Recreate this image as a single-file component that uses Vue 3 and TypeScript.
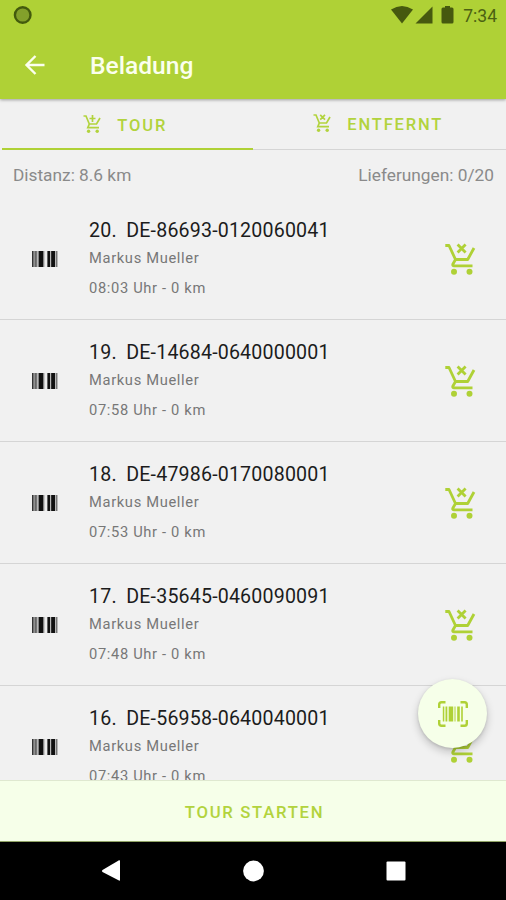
<script setup lang="ts">
interface Delivery {
  nr: number
  code: string
  name: string
  time: string
}

const deliveries: Delivery[] = [
  { nr: 20, code: 'DE-86693-0120060041', name: 'Markus Mueller', time: '08:03 Uhr - 0 km' },
  { nr: 19, code: 'DE-14684-0640000001', name: 'Markus Mueller', time: '07:58 Uhr - 0 km' },
  { nr: 18, code: 'DE-47986-0170080001', name: 'Markus Mueller', time: '07:53 Uhr - 0 km' },
  { nr: 17, code: 'DE-35645-0460090091', name: 'Markus Mueller', time: '07:48 Uhr - 0 km' },
  { nr: 16, code: 'DE-56958-0640040001', name: 'Markus Mueller', time: '07:43 Uhr - 0 km' },
]
</script>

<template>
  <div class="screen">
    <header class="top">
      <div class="status">
        <svg class="ring" width="20" height="20" viewBox="0 0 20 20">
          <circle cx="9.700" cy="10" r="7.800" fill="#83a02b" stroke="#435a0d" stroke-width="2.400" />
        </svg>
        <svg class="signals" width="66" height="20" viewBox="0 0 66 20" fill="#46590f">
          <path d="M0 4.600Q11 -2.800 22 4.600L11 18.500Z" />
          <path d="M24.500 18.500H41.500V1.500Z" />
          <path d="M54 1h5v1.500h2q1.500 0 1.500 1.500v13q0 1.500-1.500 1.500h-9q-1.500 0-1.500-1.500V4q0-1.500 1.500-1.500H54z" />
        </svg>
        <span class="clock">7:34</span>
      </div>
      <div class="appbar">
        <svg class="back" width="22" height="22" viewBox="0 0 22 22" fill="none" stroke="#fbffee" stroke-width="2.400">
          <path d="M20.500 11H3M11.500 2L2.500 11L11.500 20" />
        </svg>
        <h1>Beladung</h1>
      </div>
    </header>

    <nav class="tabs">
      <button class="tab active">
        <svg width="18" height="20" viewBox="0 0 18 20" fill="none" stroke="currentColor" stroke-width="1.700">
          <path d="M.5 2H3L6.300 10H13.500L17 4M6.300 10L4.800 13.600H16M9.500 1V8M6.500 4.500H12.500" />
          <circle cx="5.600" cy="17.300" r="1.700" fill="currentColor" stroke="none" />
          <circle cx="14.200" cy="17.300" r="1.700" fill="currentColor" stroke="none" />
        </svg>
        <span>TOUR</span>
      </button>
      <button class="tab">
        <svg width="18" height="20" viewBox="0 0 18 20" fill="none" stroke="currentColor" stroke-width="1.700">
          <path d="M.5 2H3L6.300 10H13.500L17 4M6.300 10L4.800 13.600H16M7.200 1.800L12 6.600M12 1.800L7.200 6.600" />
          <circle cx="5.600" cy="17.300" r="1.700" fill="currentColor" stroke="none" />
          <circle cx="14.200" cy="17.300" r="1.700" fill="currentColor" stroke="none" />
        </svg>
        <span>ENTFERNT</span>
      </button>
    </nav>

    <main class="content">
      <div class="summary">
        <span>Distanz: 8.6 km</span>
        <span>Lieferungen: 0/20</span>
      </div>
      <ul class="list">
        <li v-for="d in deliveries" :key="d.nr" class="row">
          <svg class="barcode" width="26" height="16" viewBox="0 0 26 16">
            <rect width="26" height="16" fill="#b8b8b8" />
            <g fill="#111">
              <rect x="0" width="1.500" height="16" fill="#333" />
              <rect x="2.500" width="2.300" height="16" fill="#666" />
              <rect x="6.700" width="4.600" height="16" />
              <rect x="15.500" width="2.500" height="16" />
              <rect x="19.200" width="3.800" height="16" />
              <rect x="24" width="1" height="16" fill="#777" />
            </g>
            <rect x="12.700" width="2.300" height="16" fill="#ededed" />
          </svg>
          <div class="text">
            <div class="title">{{ d.nr }}.<span class="code">{{ d.code }}</span></div>
            <div class="sub name">{{ d.name }}</div>
            <div class="sub time">{{ d.time }}</div>
          </div>
          <svg class="cart" width="32" height="34" viewBox="0 0 32 34" fill="none" stroke="#afd136" stroke-width="2.800" stroke-linejoin="round">
            <path d="M1.300 3.500H5L11.500 17.500H23.700L30 6" />
            <path d="M11.500 17.500L8.800 22.300Q8.300 23.800 10 23.800H28.500" />
            <path d="M13.600 2.600L21.600 10.600M21.600 2.600L13.600 10.600" />
            <circle cx="10" cy="29.800" r="3" fill="#afd136" stroke="none" />
            <circle cx="25.500" cy="29.800" r="3" fill="#afd136" stroke="none" />
          </svg>
        </li>
      </ul>
      <button class="fab" aria-label="Scan">
        <svg width="30" height="26" viewBox="0 0 30 26" fill="#afd136">
          <path d="M1.200 7V3.500Q1.200 1.200 3.500 1.200H7.500M22.500 1.200H26.500Q28.800 1.200 28.800 3.500V7M28.800 19V22.500Q28.800 24.800 26.500 24.800H22.500M7.500 24.800H3.500Q1.200 24.800 1.200 22.500V19" fill="none" stroke="#afd136" stroke-width="2.400" />
          <path d="M4.800 5.500h1.500v15H4.800zM7.500 5.500h1.800v15H7.500zM10.700 5.500h4.500v15h-4.500zM16.500 5.500h1v15h-1zM19.200 5.500h2.600v15h-2.600zM23.200 5.500h1.600v15h-1.600z" />
        </svg>
      </button>
    </main>

    <button class="start">TOUR STARTEN</button>

    <footer class="navbar">
      <svg width="506" height="58" viewBox="0 0 506 58" fill="#fff">
        <path d="M102.500 28L119 18.300Q120 18 120 19V38Q120 39 119 38.600L102.500 30Q101.200 29 102.500 28Z" />
        <circle cx="253.500" cy="29" r="10.400" />
        <rect x="386.500" y="19.500" width="19" height="19" rx="1" />
      </svg>
    </footer>
  </div>
</template>

<style>
body {
  margin: 0;
}
</style>

<style scoped>
.screen {
  width: 506px;
  height: 900px;
  display: flex;
  flex-direction: column;
  overflow: hidden;
  background: #f1f1f1;
  font-family: Roboto, "Liberation Sans", sans-serif;
}
button {
  border: 0;
  padding: 0;
  margin: 0;
  background: none;
  font: inherit;
  color: #b2d33d;
}
.top {
  flex: none;
  height: 99px;
  background: #afd136;
  box-shadow: 0 1px 3px rgba(0, 0, 0, 0.35);
  z-index: 2;
}
.status {
  height: 32px;
  display: flex;
  align-items: center;
  padding: 0 9px 0 13px;
  box-sizing: border-box;
}
.ring {
  margin-top: -2px;
}
.signals {
  margin-left: auto;
  margin-right: 6px;
  margin-top: -2px;
}
.clock {
  font-size: 17.500px;
  line-height: 32px;
  color: #4c6112;
  font-weight: 400;
}
.appbar {
  height: 65px;
  display: flex;
  align-items: center;
  padding-left: 24px;
}
h1 {
  margin: 2px 0 0 44px;
  font-size: 24.600px;
  font-weight: 500;
  color: #fbffee;
}
.tabs {
  flex: none;
  height: 51px;
  display: flex;
}
.tab {
  flex: 1;
  display: flex;
  align-items: center;
  justify-content: center;
  gap: 16.500px;
  font-size: 16.500px;
  font-weight: 500;
  letter-spacing: 1.850px;
  padding-right: 3px;
  border-bottom: 1px solid #d5d5d5;
  box-sizing: border-box;
}
.tab svg {
  margin-top: -2px;
}
.tab.active {
  flex: none;
  width: 251px;
  padding: 3px 5px 0 0;
  border-bottom: 2px solid #afd136;
  margin-left: 2px;
}
.content {
  flex: 1;
  min-height: 0;
  position: relative;
  overflow: hidden;
}
.summary {
  height: 48px;
  display: flex;
  justify-content: space-between;
  padding: 0 12px 0 13px;
  font-size: 17.300px;
  line-height: 50px;
  color: #8a8a8a;
}
.list {
  list-style: none;
  margin: 0;
  padding: 0;
}
.row {
  height: 122px;
  box-sizing: border-box;
  border-bottom: 1px solid #d5d5d5;
  display: flex;
  align-items: center;
  padding: 0 30px 0 32px;
}
.text {
  margin-left: 31px;
  padding-top: 3px;
  flex: 1;
}
.title {
  font-size: 19.600px;
  line-height: 28px;
  letter-spacing: 0.180px;
  color: #1c1c1c;
}
.code {
  margin-left: 9.500px;
}
.sub {
  font-size: 14.700px;
  line-height: 30px;
  letter-spacing: 0.660px;
  color: #777;
}
.sub.name {
  margin-top: -2px;
}
.fab {
  position: absolute;
  right: 19px;
  bottom: 32px;
  width: 69px;
  height: 69px;
  border-radius: 50%;
  background: #f6ffe9;
  display: flex;
  align-items: center;
  justify-content: center;
  box-shadow: 0 4px 8px rgba(0, 0, 0, 0.2), 0 1px 3px rgba(0, 0, 0, 0.12);
}
.start {
  flex: none;
  height: 62px;
  box-sizing: border-box;
  background: #f6ffe9;
  border-top: 1px solid #dfe8d0;
  border-bottom: 1px solid #90a365;
  padding: 2px 0 0 3px;
  font-size: 16.700px;
  font-weight: 500;
  letter-spacing: 1.700px;
}
.navbar {
  flex: none;
  height: 58px;
  background: #000;
}
</style>
